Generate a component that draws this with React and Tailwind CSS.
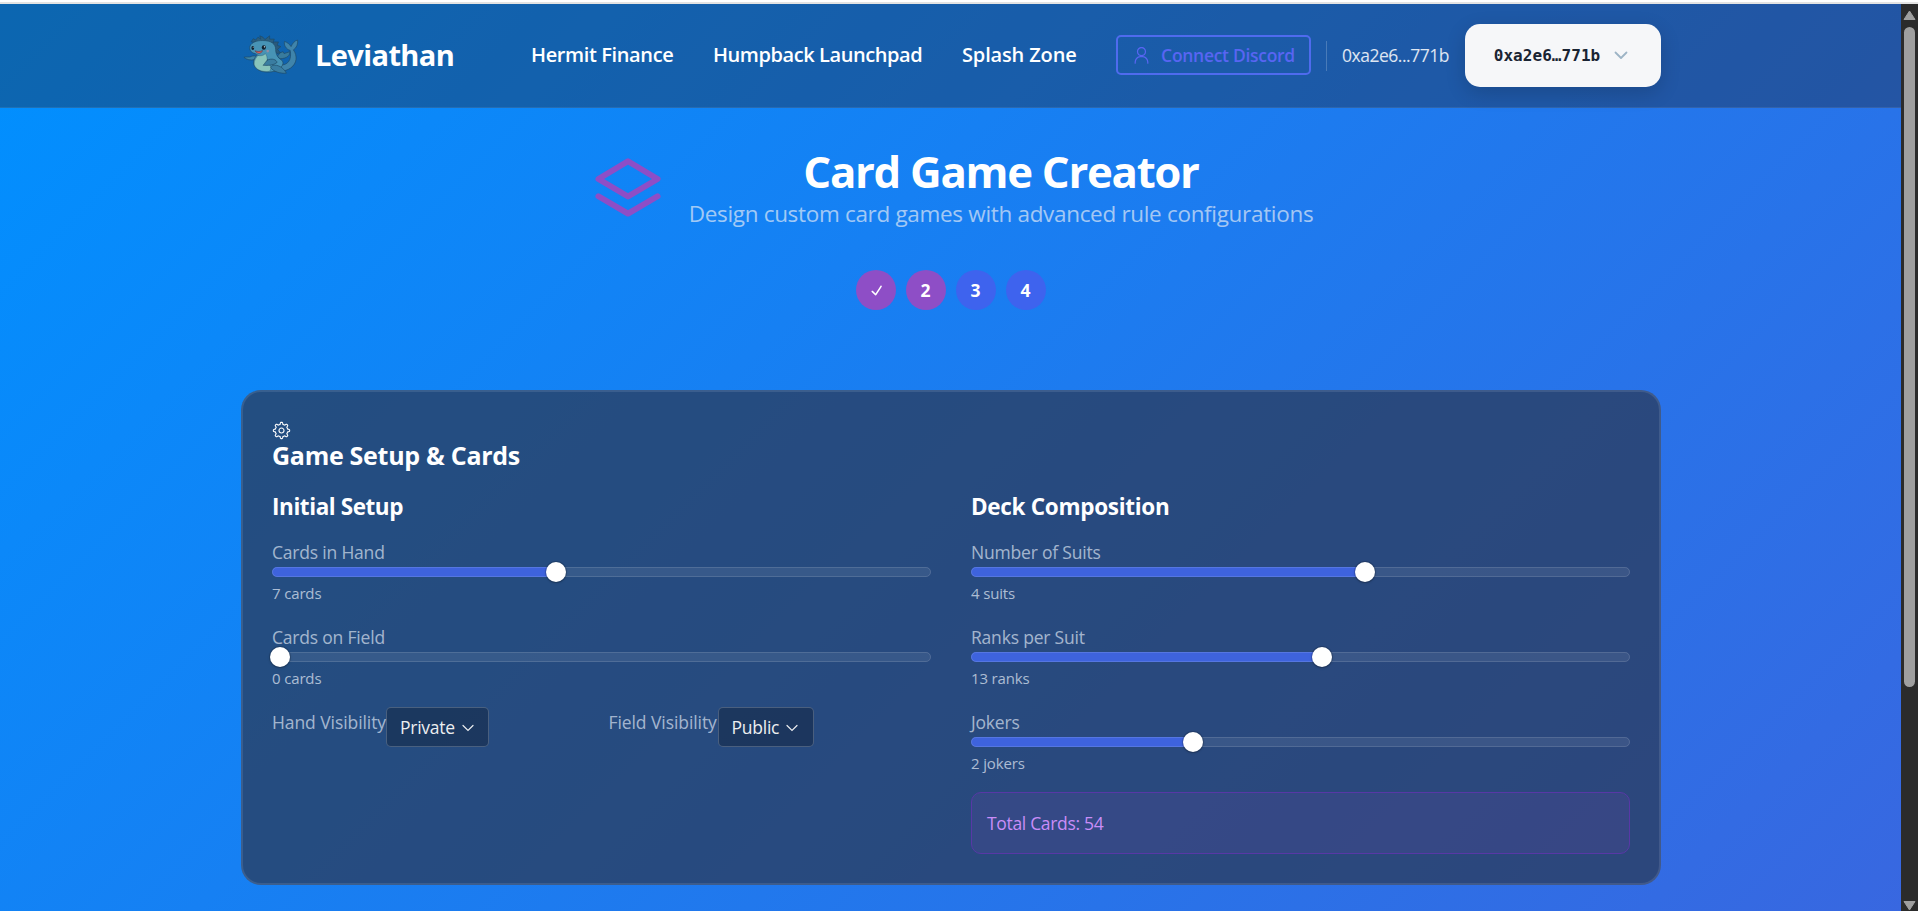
import { RxCheck, RxChevronDown, RxGear, RxPerson } from "react-icons/rx";

function Mascot() {
  return (
    <svg viewBox="0 -1 60 42" className="mr-[2px] ml-[2px] h-[40px] w-[56px] shrink-0">
      <g stroke="#1f4a66" strokeWidth="0.7" strokeLinejoin="round" strokeLinecap="round">
        <path d="M31 31C37 30 44 33 49 27C51 24 51.500 20 50.500 15C46 14 43.500 9 44.500 5.500C47.500 6.500 50 8.500 51.500 11C53 7.500 55.500 4.500 58.500 4C59 8 57.500 12.500 54 14.500C58.500 21 58 29 51 34C45 38 36 39 28 36Z" fill="#3f84ab" />
        <path d="M37 21L40 17.500L43 16.500L44 18.500L50 16.500C51 20 47 24 40 24Z" fill="#397b9d" />
        <path d="M33 6L38 6L36.500 9.500L40.500 11L37 14L40 17.500L36.500 18.500L33 15Z" fill="#2a5a7c" />
        <path d="M9 5.500L11 2.500L13.500 4L16 1L19 3L18 -0.500L21.500 1L23.500 3.500L28.500 -0.500L28.500 3L33.500 3L32 7L22 8Z" fill="#2b5f80" />
        <path d="M12 25C8 26 4 25 1 22.500C4 21.500 7 23 9 21.500C11 20.500 14 21 15.500 22Z" fill="#3f86a8" />
        <path d="M13 18.500C8 17.500 6.500 14 7.500 10.500C9.500 6 15 4.500 21 4.500C30 4.500 35 8 35 14C35 19 37 23 42 26C45 30 40 36 31 38C21 39.500 13 36 11.500 30C10.500 26 13 22 15 20Z" fill="#4793b5" />
        <path d="M16 20.500C19 21.500 22 20.500 24 18.500C27 22 25 26 27 29C30 32 31 35 28 37.500C20 38.500 13 35.500 12 30C11.500 26 14 22.500 16 20.500Z" fill="#88c4bb" strokeWidth="0.4" />
        <path d="M26 25.500C31 23 36 25 36.500 28C33 31 27 31.500 21.500 31C23.500 29.500 24 27 26 25.500Z" fill="#3a7da1" />
        <path d="M32 31C37 30 43 33 46.500 39.500C40 40 33 38 30 34Z" fill="#3a7da1" />
      </g>
      <path d="M13 15.500C15.500 16.700 18.500 16.500 20.800 15.200C20 19 15 19.300 13 15.500Z" fill="#e2665f" stroke="#4a2030" strokeWidth="0.5" />
      <ellipse cx="22.300" cy="12" rx="2.200" ry="2.400" fill="#12202e" />
      <ellipse cx="10.500" cy="12.500" rx="1.500" ry="2.100" fill="#12202e" />
      <circle cx="23" cy="11.200" r="0.700" fill="#fff" />
      <circle cx="10.900" cy="11.700" r="0.500" fill="#fff" />
      <circle cx="26.500" cy="15.800" r="1.400" fill="#b58a9c" opacity="0.7" />
    </svg>
  );
}

function Header() {
  return (
    <header className="flex h-[104px] shrink-0 items-center justify-between border-b border-white/8 bg-[#1e293b]/40 pr-[240px] pl-[241px] whitespace-nowrap">
      <div className="flex items-center gap-[14px] pb-[2px]">
        <Mascot />
        <span className="text-[29px] leading-9 font-bold tracking-[-0.6px] text-white">Leviathan</span>
      </div>
      <div className="flex items-center">
        <nav className="mr-10 flex gap-10 pb-[2px] text-[20px] leading-7 font-semibold text-white">
          <a className="w-[142px] tracking-[-0.38px]">Hermit Finance</a>
          <a className="w-[209px] tracking-[-0.43px]">Humpback Launchpad</a>
          <a className="w-[114px] tracking-[-0.15px]">Splash Zone</a>
        </nav>
        <button className="mb-px flex h-10 w-[195px] items-center justify-center gap-[10px] rounded-[5px] border-2 border-[#4f6bee] text-[17.5px] font-semibold tracking-[-0.3px] text-[#5865f2]">
          <RxPerson className="size-[19px]" />
          <span>Connect Discord</span>
        </button>
        <div className="mx-[15px] h-[30px] w-px bg-white/20" />
        <span className="mr-[15px] w-[108px] text-[17.5px] tracking-[-0.48px] text-white/85">0xa2e6...771b</span>
        <button className="flex h-[63px] w-[196px] items-center rounded-[15px] bg-[#f6f7f9] pl-[28px] shadow-[0_6px_20px_rgba(0,0,0,0.16)]">
          <span className="w-[108px] font-['DejaVu_Sans_Mono',monospace] text-[16px] font-bold tracking-[0.05px] text-[#1a2433]">0xa2e6…771b</span>
          <svg viewBox="0 0 14 9" className="ml-[12.500px] h-[9px] w-[14px]" fill="none" stroke="#9db4c6" strokeWidth="1.8" strokeLinecap="round" strokeLinejoin="round">
            <path d="M1.500 1.500L7 7L12.500 1.500" />
          </svg>
        </button>
      </div>
    </header>
  );
}

function Slider({ label, value, percent }) {
  const offset = 7.5 - (percent * 15) / 100;
  return (
    <div className="flex h-[65px] flex-col">
      <label className="text-[17.5px] leading-[26px] tracking-[-0.2px] text-[#e2eaf6]/68">{label}</label>
      <div className="relative mt-0.5 h-[10px] rounded-full bg-white/8">
        <div className="absolute inset-y-0 left-0 rounded-l-full bg-[#3e63dd]" style={{ width: `calc(${percent}% + ${offset}px)` }} />
        <div className="absolute inset-0 rounded-full border border-white/12" />
        <div
          className="absolute top-[-5px] size-5 -translate-x-1/2 rounded-full bg-white shadow-[0_0_0_1px_rgba(0,0,0,0.14),0_1px_3px_rgba(0,0,0,0.2)]"
          style={{ left: `calc(${percent}% + ${offset}px)` }}
        />
      </div>
      <span className="mt-[6px] text-[15px] leading-5 tracking-[-0.15px] text-[#e2eaf6]/72">{value}</span>
    </div>
  );
}

function Select({ value, className }) {
  return (
    <button className={`-mt-0.5 flex h-10 items-center gap-[7px] rounded-[5px] border border-white/20 bg-black/26 pl-[13px] text-[17.5px] tracking-[-0.25px] text-[#eceef0] ${className}`}>
      <span>{value}</span>
      <svg viewBox="0 0 12 8" className="mt-[2px] h-2 w-3" fill="none" stroke="currentColor" strokeWidth="1.2" strokeLinecap="round">
        <path d="M1 1.500L6 6.500L11 1.500" />
      </svg>
    </button>
  );
}

function Steps() {
  return (
    <div className="mt-[40px] flex justify-center gap-[10px] text-[17.5px] font-bold text-white">
      <div className="flex size-10 items-center justify-center rounded-full bg-[#8e4ec6]"><RxCheck className="size-[19px]" /></div>
      <div className="flex size-10 items-center justify-center rounded-full bg-[#8e4ec6] pr-px">2</div>
      <div className="flex size-10 items-center justify-center rounded-full bg-[#3e63ee] pr-px">3</div>
      <div className="flex size-10 items-center justify-center rounded-full bg-[#3e63ee] pr-px">4</div>
    </div>
  );
}

function SetupCard() {
  return (
    <section className="mx-auto mt-20 h-[495px] w-[1420px] rounded-[20px] border-2 border-white/10 bg-[#2b3b59]/75 p-[29px]">
      <RxGear className="block size-[19px] text-white" />
      <h2 className="text-[25px] leading-[30px] font-bold tracking-[-0.28px] text-white">Game Setup &amp; Cards</h2>
      <div className="mt-[21px] grid grid-cols-2 gap-10">
        <div>
          <h3 className="mb-[16px] text-[22.5px] leading-8 font-bold tracking-[-0.42px] text-white">Initial Setup</h3>
          <div className="flex flex-col gap-5">
            <Slider label="Cards in Hand" value="7 cards" percent={42.86} />
            <Slider label="Cards on Field" value="0 cards" percent={0} />
            <div className="grid grid-cols-2 gap-4 text-[17.5px] tracking-[-0.08px]">
              <div className="flex items-start whitespace-nowrap">
                <label className="w-[114px] leading-[26px] text-[#e2eaf6]/68">Hand Visibility</label>
                <Select value="Private" className="w-[103px]" />
              </div>
              <div className="flex items-start whitespace-nowrap">
                <label className="-ml-px w-[109px] leading-[26px] text-[#e2eaf6]/68">Field Visibility</label>
                <Select value="Public" className="w-[96px]" />
              </div>
            </div>
          </div>
        </div>
        <div>
          <h3 className="mb-[16px] text-[22.5px] leading-8 font-bold tracking-[-0.3px] text-white">Deck Composition</h3>
          <div className="flex flex-col gap-5">
            <Slider label="Number of Suits" value="4 suits" percent={60} />
            <Slider label="Ranks per Suit" value="13 ranks" percent={53.33} />
            <Slider label="Jokers" value="2 jokers" percent={33.33} />
          </div>
          <div className="mt-[18px] flex h-[62px] items-center rounded-[10px] border border-[#5838a6] bg-[#8e4ec6]/12 pl-[15px] text-[17.5px] tracking-[-0.32px] text-[#c98df8]">
            Total Cards: 54
          </div>
        </div>
      </div>
    </section>
  );
}

function Scrollbar() {
  return (
    <div className="flex h-[907px] w-[17px] shrink-0 flex-col items-center bg-[#2b2b2b] pt-[6px]">
      <svg viewBox="0 0 13 10" className="h-[10px] w-[13px]" fill="#9f9f9f" stroke="#9f9f9f" strokeLinejoin="round"><path d="M6.500 1L12 9.500H1Z" /></svg>
      <div className="mt-[7px] h-[660px] w-[11px] rounded-full bg-[#9f9f9f]" />
      <svg viewBox="0 0 13 10" className="mt-auto h-[10px] w-[13px]" fill="#9f9f9f" stroke="#9f9f9f" strokeLinejoin="round"><path d="M1 0.500H12L6.500 9Z" /></svg>
    </div>
  );
}

export default function App() {
  return (
    <div className="h-[911px] overflow-hidden font-['Open_Sans',sans-serif]">
      <div className="h-1 border-b-2 border-[#e3e3e3] bg-white" />
      <div className="flex h-[907px] overflow-hidden">
        <div className="h-[1199px] min-w-0 flex-1 bg-[linear-gradient(135deg,#0090ff,#3e63dd)]">
          <Header />
          <main className="pt-[38px] pl-px">
            <div className="flex items-center justify-center gap-5">
              <svg viewBox="0 0 15 15" className="size-20" fill="none" stroke="#8e4ec6" strokeWidth="1.100" strokeLinecap="round" strokeLinejoin="round">
                <path d="M7.500 2.500L13.050 5.800L7.500 9.100L1.950 5.800Z" />
                <path d="M1.950 9.050L7.500 12.300L13.050 9.050" />
              </svg>
              <div className="w-[626px] text-center whitespace-nowrap">
                <h1 className="text-[43.75px] leading-[50px] font-bold tracking-[-1.3px] text-white">Card Game Creator</h1>
                <p className="mt-px text-[22.5px] leading-[33px] tracking-[-0.32px] text-[#e2eaf6]/70">Design custom card games with advanced rule configurations</p>
              </div>
            </div>
            <Steps />
            <SetupCard />
          </main>
        </div>
        <Scrollbar />
      </div>
    </div>
  );
}
